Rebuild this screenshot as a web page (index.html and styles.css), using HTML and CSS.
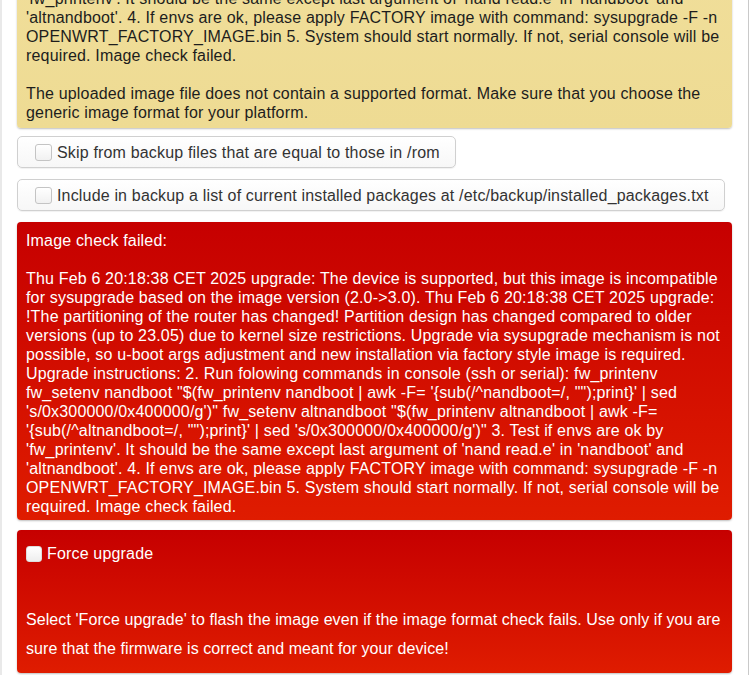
FILE: index.html
```html
<!DOCTYPE html>
<html>
<head>
<meta charset="utf-8">
<link rel="stylesheet" href="styles.css">
</head>
<body>
<div class="page">
  <div class="alert alert-warning">Image check failed:<br><br>Thu Feb 6 20:18:38 CET 2025 upgrade: The device is supported, but this image is incompatible for sysupgrade based on the image version (2.0-&gt;3.0). Thu Feb 6 20:18:38 CET 2025 upgrade: !The partitioning of the router has changed! Partition design has changed compared to older versions (up to 23.05) due to kernel size restrictions. Upgrade via sysupgrade mechanism is not possible, so u-boot args adjustment and new installation via factory style image is required. Upgrade instructions: 2. Run folowing commands in console (ssh or serial): fw_printenv fw_setenv nandboot "$(fw_printenv nandboot | awk -F= '{sub(/^nandboot=/, "");print}' | sed 's/0x300000/0x400000/g')" fw_setenv altnandboot "$(fw_printenv altnandboot | awk -F= '{sub(/^altnandboot=/, "");print}' | sed 's/0x300000/0x400000/g')" 3. Test if envs are ok by 'fw_printenv'. It should be the same except last argument of 'nand read.e' in 'nandboot' and 'altnandboot'. 4. If envs are ok, please apply FACTORY image with command: sysupgrade -F -n OPENWRT_FACTORY_IMAGE.bin 5. System should start normally. If not, serial console will be required. Image check failed.<br><br>The uploaded image file does not contain a supported format. Make sure that you choose the generic image format for your platform.</div>

  <div class="opt-row"><label class="opt"><span class="cbox"></span>Skip from backup files that are equal to those in /rom</label></div>
  <div class="opt-row"><label class="opt"><span class="cbox"></span>Include in backup a list of current installed packages at /etc/backup/installed_packages.txt</label></div>

  <div class="alert alert-danger">Image check failed:<br><br>Thu Feb 6 20:18:38 CET 2025 upgrade: The device is supported, but this image is incompatible for sysupgrade based on the image version (2.0-&gt;3.0). Thu Feb 6 20:18:38 CET 2025 upgrade: !The partitioning of the router has changed! Partition design has changed compared to older versions (up to 23.05) due to kernel size restrictions. Upgrade via sysupgrade mechanism is not possible, so u-boot args adjustment and new installation via factory style image is required. Upgrade instructions: 2. Run folowing commands in console (ssh or serial): fw_printenv fw_setenv nandboot "$(fw_printenv nandboot | awk -F= '{sub(/^nandboot=/, "");print}' | sed 's/0x300000/0x400000/g')" fw_setenv altnandboot "$(fw_printenv altnandboot | awk -F= '{sub(/^altnandboot=/, "");print}' | sed 's/0x300000/0x400000/g')" 3. Test if envs are ok by 'fw_printenv'. It should be the same except last argument of 'nand read.e' in 'nandboot' and 'altnandboot'. 4. If envs are ok, please apply FACTORY image with command: sysupgrade -F -n OPENWRT_FACTORY_IMAGE.bin 5. System should start normally. If not, serial console will be required. Image check failed.</div>

  <div class="alert alert-danger force">
    <label class="force-label"><span class="cbox white"></span>Force upgrade</label>
    <p class="force-note">Select 'Force upgrade' to flash the image even if the image format check fails. Use only if you are sure that the firmware is correct and meant for your device!</p>
  </div>
</div>
</body>
</html>
```

FILE: styles.css
```css
html, body {
  margin: 0;
  padding: 0;
  background: #fff;
  overflow: hidden;
}

body {
  font-family: "Liberation Sans", Arial, sans-serif;
  font-size: 16px;
  letter-spacing: 0.17px;
  line-height: 19px;
  color: #222;
}

.page {
  width: 715px;
  margin-top: -230px;
  padding: 0 16px 20px 15px;
  border-left: 2px solid #e9e9e9;
  border-right: 1px solid #c9c9c9;
  min-height: 900px;
}

.alert {
  border-radius: 4px;
  padding: 10px 9px 6px 9px;
  box-shadow: 0 1px 2px rgba(0, 0, 0, 0.25);
}

.alert-warning {
  background: linear-gradient(to bottom, #f3e2a2, #eedb93);
  color: #1d1d1d;
  margin-bottom: 8px;
}

.alert-danger {
  background: linear-gradient(to bottom, #c60000, #df1c00);
  color: #fff;
  padding-top: 9px;
  padding-bottom: 4px;
  margin-bottom: 10px;
}

.opt-row {
  margin-bottom: 11px;
}

.opt {
  display: inline-flex;
  align-items: center;
  height: 30px;
  padding: 0 15px 0 17px;
  border: 1px solid #d0d0d0;
  border-radius: 5px;
  background: linear-gradient(to bottom, #fff, #f7f7f7);
  box-shadow: 0 1px 1px rgba(0, 0, 0, 0.06);
  color: #333;
}

.cbox {
  display: inline-block;
  box-sizing: border-box;
  width: 17px;
  height: 17px;
  margin-right: 5px;
  border: 1px solid #c4c4c4;
  border-radius: 3px;
  background: linear-gradient(to bottom, #fff, #f1f1f1);
}

.cbox.white {
  width: 16px;
  height: 16px;
  border-color: #ddd;
  background: linear-gradient(to bottom, #fff, #eee);
}

.alert-danger.force {
  padding: 16px 4px 10px 9px;
}

.force-label {
  display: flex;
  align-items: center;
  line-height: 16px;
}

.force-note {
  margin: 43px 0 0 0;
  line-height: 29px;
  letter-spacing: 0.08px;
}
```
